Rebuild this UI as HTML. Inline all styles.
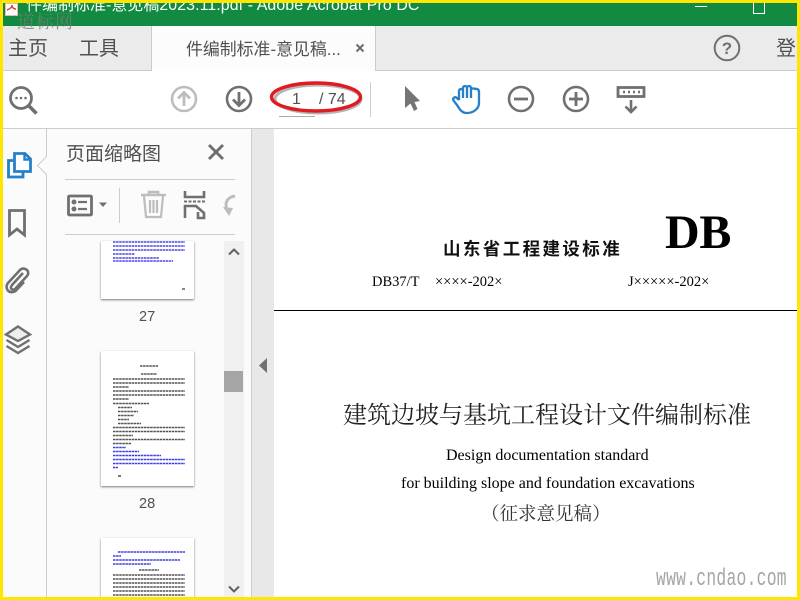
<!DOCTYPE html>
<html><head><meta charset="utf-8"><style>
html,body{margin:0;padding:0;width:800px;height:600px;overflow:hidden;background:#fff}
body{position:relative;font-family:"Liberation Sans","Noto Sans CJK SC",sans-serif}
.a{position:absolute;white-space:nowrap}
.s{font-family:"Liberation Serif","Noto Serif CJK SC",serif;color:#000}
svg.a{overflow:visible}
</style></head><body>
<!-- title bar -->
<div class="a" style="left:0;top:0;width:800px;height:26px;background:#128a41;overflow:hidden">
<div class="a" style="left:26px;top:-4px;font-size:15.9px;line-height:20px;color:#fff;letter-spacing:.1px">件编制标准-意见稿2023.11.pdf - Adobe Acrobat Pro DC</div>
<div class="a" style="left:5px;top:3px;width:11px;height:11px;background:#fff;border:1px solid #e8b8b8"></div>
<svg class="a" style="left:6px;top:4px" width="11" height="9"><path d="M1 6C4 5 6 3 6 1C6 4 8 5 10 5" fill="none" stroke="#d9403a" stroke-width="1.500"/></svg>
<div class="a" style="left:695px;top:6px;width:12px;height:1px;background:#fff"></div>
<div class="a" style="left:753px;top:2px;width:10px;height:10px;border:1px solid #fff"></div>
</div>
<!-- tabs -->
<div class="a" style="left:0;top:26px;width:800px;height:45px;background:#ebebeb;border-bottom:1px solid #ccc;box-sizing:border-box"></div>
<div class="a" style="left:151px;top:26px;width:225px;height:45px;background:#fcfcfc;border-left:1px solid #ccc;border-right:1px solid #ccc;box-sizing:border-box"></div>
<div class="a" style="left:17px;top:9px;font-size:18px;line-height:24px;color:rgba(120,125,120,.8);letter-spacing:1px;font-family:'Noto Serif CJK SC',serif">道标网</div>
<div class="a" style="left:8px;top:36px;font-size:20px;line-height:26px;color:#505050">主页</div>
<div class="a" style="left:79px;top:36px;font-size:20px;line-height:26px;color:#505050">工具</div>
<div class="a" style="left:186px;top:37px;font-size:16.9px;line-height:26px;color:#505050">件编制标准-意见稿...</div>
<svg class="a" style="left:355px;top:43px" width="12" height="12"><path d="M1.500 1.500L8.500 8.500M8.500 1.500L1.500 8.500" stroke="#6e6e6e" stroke-width="2"/></svg>
<svg class="a" style="left:713px;top:34px" width="28" height="28"><circle cx="14" cy="14" r="12.300" fill="none" stroke="#707070" stroke-width="2"/><text x="14" y="20" font-family="Liberation Sans" font-weight="bold" font-size="17" text-anchor="middle" fill="#707070">?</text></svg>
<div class="a" style="left:776px;top:36px;font-size:20px;line-height:26px;color:#505050">登</div>
<!-- toolbar -->
<div class="a" style="left:0;top:71px;width:800px;height:58px;background:#fff;border-bottom:1px solid #ccc;box-sizing:border-box"></div>
<svg class="a" style="left:9px;top:85px" width="30" height="32"><circle cx="12" cy="13" r="10.500" fill="none" stroke="#707070" stroke-width="2.800"/><path d="M20 21L27.500 28.500" stroke="#707070" stroke-width="3.600"/><circle cx="7.500" cy="13" r="1.300" fill="#707070"/><circle cx="12" cy="13" r="1.300" fill="#707070"/><circle cx="16.500" cy="13" r="1.300" fill="#707070"/></svg>
<svg class="a" style="left:170px;top:85px" width="28" height="28"><circle cx="14" cy="14" r="12" fill="none" stroke="#bdbdbd" stroke-width="2.600"/><path d="M14 21V8M8 13.500L14 7.500L20 13.500" fill="none" stroke="#bdbdbd" stroke-width="2.800"/></svg>
<svg class="a" style="left:225px;top:85px" width="28" height="28"><circle cx="14" cy="14" r="12" fill="none" stroke="#707070" stroke-width="2.600"/><path d="M14 7V20M8 14.500L14 20.500L20 14.500" fill="none" stroke="#707070" stroke-width="2.800"/></svg>
<div class="a" style="left:292px;top:90px;font-size:16px;line-height:20px;color:#505050">1</div>
<div class="a" style="left:319px;top:90px;font-size:16px;line-height:20px;color:#505050">/ 74</div>
<div class="a" style="left:279px;top:116px;width:36px;height:1px;background:#aaa"></div>
<svg class="a" style="left:268px;top:80px" width="100" height="40"><ellipse cx="50" cy="19" rx="43" ry="14" fill="none" stroke="#777" stroke-width="3" opacity=".55"/><ellipse cx="48" cy="17" rx="44.500" ry="14" fill="none" stroke="#e11a22" stroke-width="3.400"/></svg>
<div class="a" style="left:370px;top:82px;width:1px;height:35px;background:#ccc"></div>
<svg class="a" style="left:403px;top:85px" width="20" height="28"><path d="M2 1L17 16L11.500 17L14.500 24L11 26L7.500 18.500L2 23Z" fill="#757575"/></svg>
<svg class="a" style="left:451px;top:84px" width="30" height="31"><path d="M8 16V7a2 2 0 0 1 4 0V14M12 14V4a2 2 0 0 1 4 0V14M16 14V4a2 2 0 0 1 4 0V14M20 14V6a2.500 2.500 0 0 1 4 -1a3 3 0 0 1 4 2.500V19C28 25 22 29 16 29C11 29 9 26 6 21L2.500 16.500C1.500 14.500 3.500 12 6 14L8 16" fill="none" stroke="#2680c9" stroke-width="2.300" stroke-linejoin="round"/></svg>
<svg class="a" style="left:507px;top:85px" width="28" height="28"><circle cx="14" cy="14" r="12" fill="none" stroke="#707070" stroke-width="2.600"/><path d="M7 14H21" stroke="#707070" stroke-width="2.800"/></svg>
<svg class="a" style="left:562px;top:85px" width="28" height="28"><circle cx="14" cy="14" r="12" fill="none" stroke="#707070" stroke-width="2.600"/><path d="M7 14H21M14 7V21" stroke="#707070" stroke-width="2.800"/></svg>
<svg class="a" style="left:616px;top:85px" width="30" height="30"><rect x="2" y="2.500" width="26" height="9" fill="#fff" stroke="#707070" stroke-width="2.800"/><path d="M7 7h2M12 7h2M17 7h2M22 7h2" stroke="#707070" stroke-width="2.400"/><path d="M15 15V27M9.500 21.500L15 27L20.500 21.500" fill="none" stroke="#707070" stroke-width="2.600"/></svg>
<!-- left rail -->
<div class="a" style="left:0;top:129px;width:47px;height:471px;background:#fbfbfb;border-right:1px solid #ccc;box-sizing:border-box"></div>
<svg class="a" style="left:6px;top:150px" width="27" height="32"><path d="M7 10.500H2.500V27H17V22" fill="none" stroke="#2680c9" stroke-width="2.800"/><path d="M8.500 3.500H19L24.500 9V21.500H8.500Z" fill="#fff" stroke="#2680c9" stroke-width="2.800"/><path d="M18.500 3.500V9.500H24.500" fill="none" stroke="#2680c9" stroke-width="2.400"/></svg>
<svg class="a" style="left:36px;top:156px" width="12" height="20"><path d="M11 0L1.500 9.500L11 19" fill="#fbfbfb" stroke="#ccc"/></svg>
<svg class="a" style="left:8px;top:209px" width="18" height="28"><path d="M1.500 1.500H16.500V26L9 20L1.500 26Z" fill="none" stroke="#707070" stroke-width="2.800"/></svg>
<svg class="a" style="left:4px;top:265px" width="26" height="28"><path d="M19 8L8 20C5 24 9 26 11.500 23.500L23 11C27 6 20 1 16 5L4 18C0 23 5 30 11.500 26L20 17" fill="none" stroke="#707070" stroke-width="2.600"/></svg>
<svg class="a" style="left:4px;top:325px" width="28" height="30"><path d="M14 1.500L26 9.500L14 16L2 9.500Z" fill="#eee" stroke="#707070" stroke-width="2.400"/><path d="M2.500 15L14 22L25.500 15M2.500 21L14 28L25.500 21" fill="none" stroke="#707070" stroke-width="2.400"/></svg>
<!-- panel -->
<div class="a" style="left:47px;top:129px;width:204px;height:471px;background:#fbfbfb"></div>
<div class="a" style="left:66px;top:142px;font-size:19px;line-height:26px;color:#505050">页面缩略图</div>
<svg class="a" style="left:207px;top:143px" width="18" height="18"><path d="M2 2L16 16M16 2L2 16" stroke="#707070" stroke-width="3"/></svg>
<div class="a" style="left:65px;top:179px;width:170px;height:1px;background:#ccc"></div>
<div class="a" style="left:65px;top:234px;width:170px;height:1px;background:#ccc"></div>
<svg class="a" style="left:67px;top:194px" width="45" height="24"><rect x="1.500" y="2" width="23" height="19" rx="1" fill="none" stroke="#707070" stroke-width="2.800"/><circle cx="7" cy="8" r="2.500" fill="#707070"/><circle cx="7" cy="15" r="2.500" fill="#707070"/><path d="M11 8H20M11 15H20" stroke="#707070" stroke-width="2.200"/><path d="M32 8.500H40L36 13Z" fill="#707070"/></svg>
<div class="a" style="left:119px;top:188px;width:1px;height:35px;background:#ccc"></div>
<svg class="a" style="left:140px;top:190px" width="27" height="29"><path d="M1 5H26M9 4.500V2H18V4.500" fill="none" stroke="#bdbdbd" stroke-width="2.600"/><path d="M4 6L6 27H21L23 6M10 10V23M13.500 10V23M17 10V23" fill="none" stroke="#bdbdbd" stroke-width="2.200"/></svg>
<svg class="a" style="left:183px;top:191px" width="23" height="28"><path d="M2 0V6H21V0M2 27V15H13L21 22V27H15V21" fill="none" stroke="#707070" stroke-width="2.600"/><path d="M1 10.500H22" stroke="#707070" stroke-width="2" stroke-dasharray="3 1.500"/></svg>
<svg class="a" style="left:222px;top:193px" width="13" height="27"><path d="M13 3C6 4 2 9 5 17" fill="none" stroke="#bdbdbd" stroke-width="3"/><path d="M1 14L11 15L7 23Z" fill="#bdbdbd"/></svg>
<!-- thumbnails -->
<div class="a" style="left:101px;top:241px;width:93px;height:58px;background:#fff;box-shadow:0 1px 2px #777">
<svg class="a" style="left:0;top:0" width="93" height="58"><g stroke="#1a1ae6" stroke-width="1.500" opacity=".8"><path d="M12 1H84M12 5H84M12 9H84M12 13H34M12 17H58M12 20H72" stroke-dasharray="2.500 .6"/></g><path d="M81 48h3" stroke="#888" stroke-width="2"/></svg></div>
<div class="a" style="left:139px;top:308px;font-size:14.500px;line-height:18px;color:#505050">27</div>
<div class="a" style="left:101px;top:351px;width:93px;height:135px;background:#fff;box-shadow:0 1px 2px #777">
<svg class="a" style="left:0;top:0" width="93" height="135"><g stroke="#111" stroke-width="1.600" opacity=".72" stroke-dasharray="2.500 .6"><path d="M39 15H57M40 23H56M12 28H84M12 32H84M12 36H28M12 40H84M12 44H84M12 48H28M12 52.500H48M17 56.500H31M17 60.500H37M17 64.500H33M17 68.500H28M17 72.500H40M12 76.500H84M12 80.500H84M12 84.500H32M12 88.500H84M12 92.500H30"/></g><g stroke="#1a1ae6" stroke-width="1.400" opacity=".85" stroke-dasharray="2.500 .6"><path d="M12 96.500H25M12 100.500H38M12 104.500H60M12 108.500H84M12 112.500H84M12 116.500H17"/></g><path d="M17 125h3" stroke="#777" stroke-width="2"/></svg></div>
<div class="a" style="left:139px;top:495px;font-size:14.500px;line-height:18px;color:#505050">28</div>
<div class="a" style="left:101px;top:538px;width:93px;height:62px;background:#fff;box-shadow:0 1px 2px #777">
<svg class="a" style="left:0;top:0" width="93" height="62"><g stroke="#1a1ae6" stroke-width="1.400" opacity=".85" stroke-dasharray="2.500 .6"><path d="M17 14H84M12 18H20M12 22H79M12 26H50"/></g><g stroke="#111" stroke-width="1.600" opacity=".72" stroke-dasharray="2.500 .6"><path d="M38 32H58M12 37H84M12 41H84M12 45H84M12 49H84M12 53H84M12 57H84"/></g></svg></div>
<!-- scrollbar -->
<div class="a" style="left:224px;top:241px;width:20px;height:359px;background:#f0f0f0"></div>
<div class="a" style="left:224px;top:371px;width:19px;height:21px;background:#a5a5a5"></div>
<svg class="a" style="left:228px;top:248px" width="12" height="8"><path d="M1 6.500L6 1.500L11 6.500" fill="none" stroke="#606060" stroke-width="2"/></svg>
<svg class="a" style="left:228px;top:585px" width="12" height="8"><path d="M1 1.500L6 6.500L11 1.500" fill="none" stroke="#606060" stroke-width="2"/></svg>
<!-- splitter -->
<div class="a" style="left:251px;top:129px;width:23px;height:471px;background:#e8e8e8;border-left:1px solid #ccc;box-sizing:border-box"></div>
<svg class="a" style="left:259px;top:358px" width="9" height="16"><path d="M8 0V15L0 7.500Z" fill="#707070"/></svg>
<!-- page -->
<div class="a s" style="left:443px;top:237px;font-family:'Liberation Sans','Noto Sans CJK SC',sans-serif;font-weight:bold;font-size:17.500px;line-height:24px;letter-spacing:2.400px;color:#111">山东省工程建设标准</div>
<div class="a s" style="left:665px;top:204px;font-size:48px;line-height:58px;font-weight:bold;letter-spacing:-.3px">DB</div>
<div class="a s" style="left:372px;top:273px;font-size:14.500px;line-height:18px">DB37/T</div>
<div class="a s" style="left:435px;top:273px;font-size:14.500px;line-height:18px">××××-202×</div>
<div class="a s" style="left:628px;top:273px;font-size:14.500px;line-height:18px">J×××××-202×</div>
<div class="a" style="left:274px;top:310px;width:523px;height:1px;background:#000"></div>
<div class="a s" style="left:343px;top:400px;font-size:24px;line-height:32px;color:#222">建筑边坡与基坑工程设计文件编制标准</div>
<div class="a s" style="left:446px;top:446px;font-size:16px;line-height:20px">Design documentation standard</div>
<div class="a s" style="left:401px;top:474px;font-size:16px;line-height:20px">for building slope and foundation excavations</div>
<div class="a s" style="left:481px;top:503px;font-size:18.500px;line-height:24px;color:#333">（征求意见稿）</div>
<div class="a" style="left:656px;top:566px;font-family:'Liberation Mono',monospace;font-size:24px;line-height:28px;color:#a5a5a5;transform:scaleX(.68);transform-origin:0 0;letter-spacing:.4px">www.cndao.com</div>
<!-- yellow frame -->
<div class="a" style="left:0;top:0;width:800px;height:3px;background:#ffe600"></div>
<div class="a" style="left:0;top:597px;width:800px;height:3px;background:#ffe600"></div>
<div class="a" style="left:0;top:0;width:3px;height:600px;background:#ffe600"></div>
<div class="a" style="left:797px;top:0;width:3px;height:600px;background:#ffe600"></div>
</body></html>
